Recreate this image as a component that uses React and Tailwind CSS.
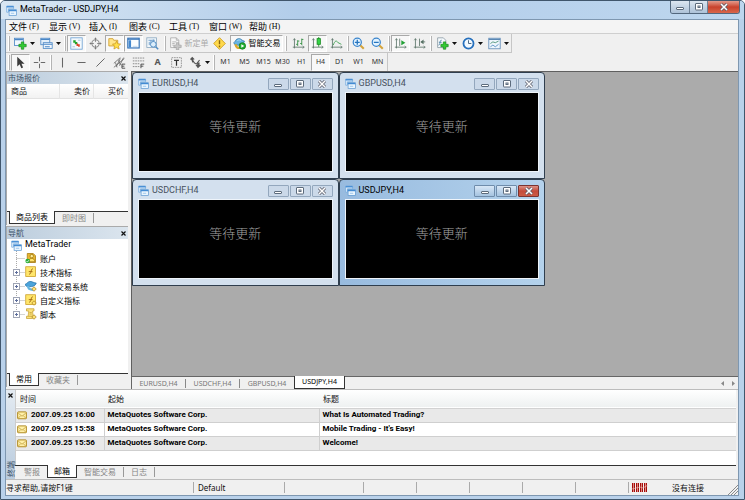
import React from "react";

const DOC = "#4a86c5";

function Svg({ children, className = "size-[13px]" }) {
  return (
    <svg viewBox="0 0 16 16" fill="none" className={`${className} shrink-0`} aria-hidden="true">
      {children}
    </svg>
  );
}

const Logo = ({ className = "size-[11px]" }) => (
  <Svg className={className}>
    <path d="M1 1.500h10v4H3.500v5H1z" fill="#eaf4fd" stroke="#69a5dc" />
    <path d="M1 2.500h10" stroke="#4b90d5" strokeWidth="2" />
    <rect x="4.500" y="7" width="10.500" height="8" fill="#eff8ff" stroke="#5794cf" />
    <path d="M4 8h11" stroke="#438bd3" strokeWidth="2" />
    <path d="M7 12h5" stroke="#75aee0" />
  </Svg>
);

const Plus = () => (
  <path d="M9 6h3v3h3v3h-3v3H9v-3H6V9h3z" fill="#32cb32" stroke="#118519" strokeWidth=".8" />
);

const NewChart = () => (
  <Svg>
    <rect x=".5" y="1.500" width="11" height="9" fill="#f1f8fe" stroke={DOC} />
    <path d="M1 3h10" stroke={DOC} strokeWidth="2" />
    <Plus />
  </Svg>
);
const Profiles = () => (
  <Svg>
    <rect x="1" y="1.500" width="11" height="8" fill="#e3effa" stroke={DOC} />
    <path d="M1 3h11" stroke={DOC} strokeWidth="1.500" />
    <rect x="4" y="7" width="11" height="7" fill="#f1f7fd" stroke={DOC} />
    <path d="M4 9h11M6 12h6" stroke={DOC} strokeWidth="1.300" />
  </Svg>
);
const MarketIcon = () => (
  <Svg>
    <rect x="1" y="1" width="14" height="14" fill="#f4f9fd" stroke="#6aa0d2" />
    <path d="M4 4h3v2h2v3H6V7H4z" fill="#20a52b" />
    <path d="M8 8h2v1h2v3h-2v-1H8z" fill="#e04027" />
    <path d="M10 4h3M3 12h3" stroke="#9dbbd4" />
  </Svg>
);
const Target = () => (
  <Svg>
    <circle cx="8" cy="8" r="4.500" stroke="#8b8b8b" strokeWidth="1.300" />
    <path d="M8 1v5M8 10v5M1 8h5M10 8h5" stroke="#777" />
    <path d="m6.500 2.500 1.500-2 1.500 2zM6.500 13.500l1.500 2 1.500-2zM2.500 6.500.5 8l2 1.500zM13.500 6.500l2 1.500-2 1.500z" fill="#777" />
  </Svg>
);
const StarFolder = () => (
  <Svg>
    <path d="M1 2h5l1 2h5v7H1z" fill="#ffe58a" stroke="#cf9b22" />
    <path d="m10.500 5 1.500 3.300 3.500.4-2.600 2.500.7 3.600-3.100-1.800-3.200 1.800.7-3.600-2.500-2.500 3.500-.4z" fill="#ffdf48" stroke="#c69115" strokeWidth=".8" />
  </Svg>
);
const TerminalIcon = () => (
  <Svg>
    <rect x="1" y="1.500" width="14" height="12" fill="#fafdff" stroke="#2f6fb6" strokeWidth="1.400" />
    <path d="M1 3h14" stroke="#2f6fb6" />
    <rect x="2" y="4" width="3" height="9" fill="#4388cf" />
    <path d="M7 11.500h6" stroke="#b7d3eb" />
  </Svg>
);
const Tester = () => (
  <Svg>
    <rect x="1" y="1" width="12" height="12" fill="#f3f8fb" stroke="#8aa7bf" />
    <path d="M3 4h8M4 10V6M6 8V4M9 7V3" stroke="#5d93c5" />
    <circle cx="9" cy="9" r="3.500" fill="#dceefb" stroke="#4f8cc3" strokeWidth="1.200" />
    <path d="m12 12 3 3" stroke="#4f8cc3" strokeWidth="1.800" />
  </Svg>
);
const NewOrder = () => (
  <Svg>
    <path d="M2 1h7l3 3v9H2z" fill="#f8f8f8" stroke="#aaa" />
    <path d="M9 1v3h3M4 6h5M4 8h3M4 10h2" stroke="#aaa" />
    <path d="M9 7h3v3h3v3h-3v3H9v-3H6v-3h3z" fill="#c6c6c6" stroke="#999" strokeWidth=".7" />
  </Svg>
);
const Warning = () => (
  <Svg>
    <path d="m8 .8 7.200 7.200L8 15.200.8 8z" fill="#ffd94b" stroke="#c79817" />
    <path d="M8 4v5M8 10.500v2" stroke="#8a6610" strokeWidth="1.700" />
  </Svg>
);
const Expert = () => (
  <Svg>
    <path d="M1 7c2-1 2-5 6-5s4 3 7 3c0 3-5 5-8 5S1 9 1 7z" fill="#67b4e2" stroke="#347aaf" />
    <path d="M5 5c1-2 4-2 5 0" stroke="#b8e4f7" />
    <path d="M3 9c1 4 3 5 6 4" stroke="#dba82d" strokeWidth="3" />
    <circle cx="11.500" cy="11" r="4" fill="#20ad32" stroke="#11811d" />
    <path d="m10.200 8.800 3.600 2.200-3.600 2.200z" fill="#fff" />
  </Svg>
);

const Axes = ({ children }) => (
  <Svg>
    <path d="M3 2v12M1 12.500h14" stroke="#567064" />
    <path d="m1.500 4 1.500-2 1.500 2M13 11l2 1.500-2 1.500" stroke="#567064" strokeWidth=".8" />
    {children}
  </Svg>
);
const Bars = () => (
  <Axes><path d="M7 4v7M5 9h2M7 5h2M12 2v8M10 8h2M12 3h2" stroke="#258734" /></Axes>
);
const Candles = () => (
  <Axes>
    <path d="M9.500 0v12" stroke="#15891e" />
    <rect x="7.500" y="2" width="4" height="7" fill="#35d647" stroke="#15891e" />
  </Axes>
);
const LineIcon = () => (
  <Axes><path d="M4 10c2-6 4-6 6-3l4 2" stroke="#2f9a42" /></Axes>
);
const Scroll = () => (
  <Axes><path d="M7 2v9" stroke="#567064" /><path d="m9 4 5 3-5 3z" fill="#23a137" /></Axes>
);
const Shift = () => (
  <Axes><path d="M8 2v9M10 6h5" stroke="#567064" /><path d="m13 3-4 3 4 3z" fill="#567064" /></Axes>
);
const Zoom = ({ plus }) => (
  <Svg>
    <path d="m10 10 4.500 4.500" stroke="#d4a33a" strokeWidth="2.600" />
    <circle cx="6.500" cy="6.500" r="5" fill="#e3f3ff" stroke="#3984cc" strokeWidth="1.500" />
    <path d={plus ? "M3.500 6.500h6M6.500 3.500v6" : "M3.500 6.500h6"} stroke="#2675bf" strokeWidth="1.600" />
  </Svg>
);
const Indicators = () => (
  <Svg>
    <path d="M2 1h7l3 3v9H2z" fill="#f6fafc" stroke="#8b9aa4" />
    <path d="M7 4C4 3 6 10 3 10M3.500 6.500H7" stroke="#41799f" />
    <Plus />
  </Svg>
);
const Clock = () => (
  <Svg>
    <circle cx="8" cy="8" r="6.200" fill="#f2f9ff" stroke="#2670bd" strokeWidth="2.200" />
    <path d="M8 4v4h3.500" stroke="#4a6884" strokeWidth="1.200" />
  </Svg>
);
const Template = () => (
  <Svg>
    <rect x="1" y="1.500" width="14" height="13" fill="#edf5fc" stroke="#5a87b4" />
    <path d="M1 3h14" stroke="#5a87b4" strokeWidth="1.600" />
    <path d="m3 8 3-2 3 1 4-2" stroke="#3d8a6d" />
    <path d="m3 12 3-2 3 2 4-3" stroke="#4b87bd" />
  </Svg>
);

const Cursor = () => (
  <Svg><path d="M4 1v12l3-3 2 5 2.200-1-2-4.500H13z" fill="#3d3d3d" /></Svg>
);
const Cross = () => (
  <Svg><path d="M8 1v5.500M8 9.500V15M1 8h5.500M9.500 8H15" stroke="#666" strokeWidth="1.200" /></Svg>
);
const VLine = () => <Svg><path d="M8 2v12" stroke="#666" strokeWidth="1.300" /></Svg>;
const HLine = () => <Svg><path d="M3 8h10" stroke="#666" strokeWidth="1.300" /></Svg>;
const Diagonal = () => <Svg><path d="M3 13 13 3" stroke="#666" strokeWidth="1.200" /></Svg>;
const Channel = () => (
  <Svg>
    <path d="m1 9 8-7M1 14 14 3M4 13l5-10M8 12l5-10M3 8l2 6M7 5l2 6" stroke="#666" />
    <path d="M15 10h-4v5h4M11 12.500h3" stroke="#333" />
  </Svg>
);
const Fibo = () => (
  <Svg>
    <path d="M1 2.500h14M1 6h14M1 9.500h8M1 13h8" stroke="#777" strokeDasharray="2 1" />
    <path d="M15 10h-4v5M11 12.500h3" stroke="#333" />
  </Svg>
);
const LabelIcon = () => (
  <Svg>
    <rect x="2" y="2" width="12" height="12" stroke="#888" strokeDasharray="2 1" />
    <path d="M5 5.500h6M8 5.500V12" stroke="#333" strokeWidth="1.500" />
  </Svg>
);
const Arrows = () => (
  <Svg>
    <path d="m1 4 3-3 3 3-2 .5L7 8H4L3 5zM11 15l-3-4h2V8h3v3h2z" fill="#555" />
    <path d="m6 8 3 2 4-5" stroke="#555" strokeWidth="1.300" />
  </Svg>
);

const Caret = () => (
  <svg viewBox="0 0 5 3" className="h-[3px] w-[5px] shrink-0" aria-hidden="true">
    <path d="M0 0h5L2.500 3z" fill="#111" />
  </svg>
);

const Grip = ({ w = "w-[6px]" }) => (
  <span className={`flex h-[15px] shrink-0 justify-center ${w}`}>
    <span className="w-[2px] border-x border-l-white border-r-[#b4b4b4]" />
  </span>
);

function Tool({ label, children, on, menu, w = "w-[19px]" }) {
  return (
    <button type="button" aria-label={label} aria-pressed={on} className={`flex h-[18px] shrink-0 items-center justify-center ${w}`}>
      <span
        className={`flex h-[17px] items-center justify-center gap-[3px] border ${
          on ? "w-full border-[#a9a9a9] border-r-white border-b-white bg-[#f8f8f8]" : "border-transparent"
        }`}
      >
        {children}
        {menu && <Caret />}
      </span>
    </button>
  );
}

const MENUS = [["文件", "F"], ["显示", "V"], ["插入", "I"], ["图表", "C"], ["工具", "T"], ["窗口", "W"], ["帮助", "H"]];

function CaptionButtons({ active }) {
  const base = "flex h-[12px] w-[21px] items-center justify-center rounded-[1px] border";
  const plain = active ? "border-[#6f8cab] bg-linear-to-b from-[#d8e7f6] to-[#a5c3e0]" : "border-[#93a7bd] bg-[#cbd9e9]";
  return (
    <div className="flex gap-px">
      <button type="button" aria-label="最小化" className={`${base} ${plain}`}>
        <Glyph kind="min" />
      </button>
      <button type="button" aria-label="最大化" className={`${base} ${plain}`}>
        <Glyph kind="max" />
      </button>
      <button
        type="button"
        aria-label="关闭"
        className={`${base} ${active ? "border-[#7c3430] bg-linear-to-b from-[#dc9186] via-[#c44a3a] to-[#cc5b45]" : plain}`}
      >
        <Glyph kind="close" />
      </button>
    </div>
  );
}

function Glyph({ kind }) {
  return (
    <svg viewBox="0 0 10 8" className="h-[8px] w-[10px]" fill="none" aria-hidden="true">
      {kind === "min" && <rect x="1.500" y="4.500" width="7" height="2" rx=".5" fill="#fff" stroke="#5c6b7c" />}
      {kind === "max" && (
        <>
          <rect x="1.500" y=".5" width="7" height="6.500" rx=".5" fill="#fff" stroke="#5c6b7c" />
          <rect x="4" y="3" width="2" height="1.500" fill="#fff" stroke="#5c6b7c" />
        </>
      )}
      {kind === "close" && (
        <>
          <path d="m2 1 6 6M8 1 2 7" stroke="#5c5f6c" strokeWidth="3" />
          <path d="m2 1 6 6M8 1 2 7" stroke="#fff" strokeWidth="1.500" />
        </>
      )}
    </svg>
  );
}

function ChartWindow({ name, active }) {
  return (
    <section
      className={`flex h-[107px] flex-col rounded-t-[4px] border border-[#2f3e4e] px-[5px] pb-[6px] ${
        active ? "bg-linear-to-r from-[#98bbdf] to-[#b4d2ec]" : "bg-[#d3e0ee]"
      }`}
    >
      <header className="flex h-[19px] shrink-0 items-center justify-between pt-[2px]">
        <div className="flex items-center gap-[3px]">
          <Logo />
          <h2 className={`font-[Roboto,sans-serif] text-[9px] ${active ? "text-black" : "text-[#48525e]"}`}>{name}</h2>
        </div>
        <CaptionButtons active={active} />
      </header>
      <div className="flex flex-1 items-center justify-center border border-[#eef4fa] bg-black pb-[12px]">
        <span className="font-['Noto_Sans_CJK_SC',sans-serif] text-[13px] leading-[16px] font-light text-[#a3a3a3]">等待更新</span>
      </div>
    </section>
  );
}

function PanelTitle({ children }) {
  return (
    <header className="flex h-[12px] shrink-0 items-center justify-between bg-linear-to-r from-[#bccddd] to-[#dbe5ee] pr-[2px] pl-px">
      <h2 className="text-[8px] leading-[12px] text-[#3c5268]">{children}</h2>
      <button type="button" aria-label="关闭" className="flex"><CloseX /></button>
    </header>
  );
}

const CloseX = () => (
  <svg viewBox="0 0 5 5" className="size-[5px]" aria-hidden="true">
    <path d="m.5.5 4 4M4.500.5l-4 4" stroke="#111" strokeWidth="1.200" />
  </svg>
);

function Tabs({ items, active }) {
  return (
    <div role="tablist" className="flex h-[14px] shrink-0 items-start bg-[#f0f0f0]">
      {items.map((t, i) => (
        <React.Fragment key={t}>
          {i === 0 && <span className="w-[2px] self-start border-t border-[#333]" />}
          <button
            type="button"
            role="tab"
            aria-selected={i === active}
            className={
              i === active
                ? "h-[13px] border-x border-b border-[#333] bg-white px-[6px] leading-[12px] text-black"
                : "flex h-[13px] items-center border-t border-[#333] text-[#858585]"
            }
          >
            {i === active ? t : (
              <span className={`px-[7px] leading-[10px] ${i + 1 === active ? "" : "border-r border-[#999]"}`}>{t}</span>
            )}
          </button>
        </React.Fragment>
      ))}
      <span className="flex-1 border-t border-[#333]" />
    </div>
  );
}

const Account = () => (
  <Svg className="size-[12px]">
    <path d="M3 2h8l3 3v9H3z" fill="#e8b72e" stroke="#a5780f" />
    <circle cx="9" cy="5.500" r="2.300" fill="#fff09b" stroke="#9c7414" />
    <path d="M5 13c0-6 8-6 8 0z" fill="#ffe36c" stroke="#9c7414" />
    <circle cx="3.500" cy="12" r="3" fill="#26ae36" />
    <path d="m2 12 1.200 1.500L5 11" stroke="#fff" />
  </Svg>
);
const Indicator = ({ gear }) => (
  <Svg className="size-[12px]">
    <rect x="1" y="1" width="13" height="13" fill="#ffe66b" stroke="#c99a1e" />
    <path d="M10.500 4c-3-1.500-1.500 7-5 7M5 7.500h5" stroke="#a56b14" strokeWidth="1.300" />
    {gear && <path d="m12 9 3 3-3 3-3-3z" fill="#ffe272" stroke="#a98220" />}
  </Svg>
);
const Robot = () => (
  <Svg className="size-[12px]">
    <path d="M0 6c3-1 4-5 8-4s4 2 7 2c-1 4-5 5-9 5S1 8 0 6z" fill="#4ba3da" stroke="#2671a8" />
    <path d="M4 8c0 5 4 5 7 5" stroke="#65b4df" strokeWidth="3" />
    <path d="m12 9 3 3-3 3-3-3z" fill="#ffe272" stroke="#a98220" />
  </Svg>
);
const Script = () => (
  <Svg className="size-[12px]">
    <path d="M2 1h10v3h-2l1 8H4L5 4H2z" fill="#fbe27c" stroke="#c7a137" />
    <path d="M2 11h8v3H2zM6 6h3M6 8h3" fill="#fbe27c" stroke="#c7a137" />
    <path d="m12 9 3 3-3 3-3-3z" fill="#ffe272" stroke="#a98220" />
  </Svg>
);

const TREE = [
  ["账户", <Account />, false],
  ["技术指标", <Indicator />, true],
  ["智能交易系统", <Robot />, true],
  ["自定义指标", <Indicator gear />, true],
  ["脚本", <Script />, true],
];

const Node = ({ box, last }) => (
  <svg viewBox="0 0 14 14" className="h-[14px] w-[14px] shrink-0" fill="none" aria-hidden="true">
    <path d={last ? "M5.500 0v7M5.500 7.500H14" : "M5.500 0v14M5.500 7.500H14"} stroke="#a8a8a8" strokeDasharray="1 1" />
    {box && (
      <>
        <rect x="2.500" y="4.500" width="6" height="6" fill="#fff" stroke="#9fa5b5" />
        <path d="M4 7.500h3M5.500 6v3" stroke="#5f6f9c" />
      </>
    )}
  </svg>
);

const Mail = () => (
  <Svg className="size-[10px]">
    <rect x="1" y="3" width="14" height="11" rx="1" fill="#fff0a8" stroke="#ad8519" strokeWidth="1.500" />
    <path d="m2 5 6 5 6-5M2 13l4-4M14 13l-4-4" stroke="#b18a24" />
  </Svg>
);

const MAILS = [
  ["2007.09.25 16:00", "What Is Automated Trading?"],
  ["2007.09.25 15:58", "Mobile Trading - It's Easy!"],
  ["2007.09.25 15:56", "Welcome!"],
];

const FRAMES = ["M1", "M5", "M15", "M30", "H1", "H4", "D1", "W1", "MN"];
const CHARTS = ["EURUSD,H4", "USDCHF,H4", "GBPUSD,H4", "USDJPY,H4"];

export default function App() {
  return (
    <div className="flex h-screen min-h-[500px] flex-col overflow-hidden rounded-t-[5px] border border-[#40566c] bg-[#b9d1ea] pr-[5px] pb-[3px] pl-[4px] font-['Noto_Sans','Noto_Sans_CJK_SC',sans-serif] text-[8px] text-[#111]">
      <header className="-mr-[5px] -ml-[4px] flex h-[18px] shrink-0 items-start justify-between bg-linear-to-r from-[#d9e7f3] via-[#b2cdea] via-40% to-[#bdd6ee] pr-[4px] pl-[5px]">
        <div className="flex h-[18px] items-center gap-[3px]">
          <Logo />
          <h1 className="font-[Roboto,sans-serif] text-[9px] text-black">MetaTrader - USDJPY,H4</h1>
        </div>
        <div className="flex h-[13px] overflow-hidden rounded-b-[3px] border border-t-0 border-[#52677d]">
          <button type="button" aria-label="最小化" className="flex w-[19px] items-center justify-center border-r border-[#6f8398] bg-linear-to-b from-[#dce6f0] to-[#adc2d8]"><Glyph kind="min" /></button>
          <button type="button" aria-label="最大化" className="flex w-[18px] items-center justify-center border-r border-[#6f8398] bg-linear-to-b from-[#dce6f0] to-[#adc2d8]"><Glyph kind="max" /></button>
          <button type="button" aria-label="关闭" className="flex w-[31px] items-center justify-center bg-linear-to-b from-[#e39a8c] via-[#c9412c] to-[#d9664a]"><Glyph kind="close" /></button>
        </div>
      </header>

      <div className="flex min-h-0 flex-1 flex-col border border-[#7e97b0] bg-[#f0f0f0]">
        <nav className="flex h-[14px] shrink-0 items-center border-b border-[#cfcfcf] bg-[#f4f4f4] pl-[3px]">
          {MENUS.map(([name, key]) => (
            <button type="button" key={key} className="flex w-[40px] shrink-0 items-center text-[9px] leading-[12px] whitespace-nowrap text-black">
              {name}
              <span className="pl-[2px] font-['Liberation_Serif',serif] text-[8px]">({key})</span>
            </button>
          ))}
        </nav>

        <div className="flex h-[19px] shrink-0 items-center">
          <div className="flex h-full items-center border-r border-b border-[#c6c6c6]">
            <Grip w="w-[5px]" />
            <Tool label="新图表" menu w="w-[26px]"><NewChart /></Tool>
            <Tool label="配置文件" menu w="w-[26px]"><Profiles /></Tool>
            <Grip w="w-[4px]" />
            <Tool label="市场报价" on><MarketIcon /></Tool>
            <Tool label="数据窗口"><Target /></Tool>
            <Tool label="导航" on><StarFolder /></Tool>
            <Tool label="终端" on><TerminalIcon /></Tool>
            <Tool label="策略测试"><Tester /></Tool>
            <Grip />
            <Tool label="新定单" w="w-[41px]">
              <NewOrder />
              <span className="whitespace-nowrap text-[#a8a8a8]">新定单</span>
            </Tool>
            <Tool label="警告" w="w-[21px]"><Warning /></Tool>
            <Tool label="智能交易" on w="w-[53px]">
              <Expert />
              <span className="whitespace-nowrap text-black">智能交易</span>
            </Tool>
            <Grip />
            <Tool label="柱状图"><Bars /></Tool>
            <Tool label="蜡烛图" on><Candles /></Tool>
            <Tool label="折线图"><LineIcon /></Tool>
            <Grip w="w-[3px]" />
            <Tool label="放大"><Zoom plus /></Tool>
            <Tool label="缩小"><Zoom /></Tool>
            <Grip w="w-[4px]" />
            <Tool label="自动滚动" on><Scroll /></Tool>
            <Tool label="图表平移"><Shift /></Tool>
            <Grip w="w-[4px]" />
            <Tool label="技术指标" menu w="w-[26px]"><Indicators /></Tool>
            <Tool label="周期" menu w="w-[26px]"><Clock /></Tool>
            <Tool label="模板" menu w="w-[26px]"><Template /></Tool>
          </div>
        </div>

        <div className="flex h-[18px] shrink-0 items-center">
          <div className="flex h-full items-center border-r border-[#c6c6c6]">
            <Grip w="w-[5px]" />
            <Tool label="光标" on><Cursor /></Tool>
            <Tool label="十字线"><Cross /></Tool>
            <Grip w="w-[4px]" />
            <Tool label="垂直线"><VLine /></Tool>
            <Tool label="水平线"><HLine /></Tool>
            <Tool label="趋势线"><Diagonal /></Tool>
            <Tool label="等距通道"><Channel /></Tool>
            <Tool label="斐波纳契"><Fibo /></Tool>
            <Tool label="文字"><span className="text-[9px] font-bold text-[#555]">A</span></Tool>
            <Tool label="文字标签"><LabelIcon /></Tool>
            <Tool label="箭头" menu w="w-[26px]"><Arrows /></Tool>
            <Grip w="w-[4px]" />
            {FRAMES.map((f) => (
              <Tool key={f} label={f} on={f === "H4"}>
                <span className="text-[7px] text-[#333]">{f}</span>
              </Tool>
            ))}
          </div>
        </div>

        <div className="flex min-h-0 flex-1">
          <aside className="flex w-[125px] shrink-0 flex-col gap-px pr-[3px] pb-[2px]">
            <section className="flex h-[154px] shrink-0 flex-col border-t border-l border-[#aaa]">
              <PanelTitle>市场报价</PanelTitle>
              <div className="min-h-0 flex-1 bg-white">
                <table className="w-full table-fixed bg-linear-to-b from-white to-[#f2f2f2]">
                  <thead>
                    <tr className="h-[14px] border-b border-[#e2e2e2] leading-[12px]">
                      <th className="w-[52px] pl-[4px] text-left font-normal">商品</th>
                      <th className="border-l border-[#e5e5e5] pr-[3px] text-right font-normal">卖价</th>
                      <th className="border-l border-[#e5e5e5] pr-[4px] text-right font-normal">买价</th>
                    </tr>
                  </thead>
                </table>
              </div>
              <Tabs items={["商品列表", "即时图"]} active={0} />
            </section>
            <section className="flex min-h-0 flex-1 flex-col border-t border-l border-[#aaa]">
              <PanelTitle>导航</PanelTitle>
              <div className="min-h-0 flex-1 bg-white pl-[4px]">
                <div className="flex h-[12px] items-center gap-[3px]">
                  <Logo />
                  <span className="font-[Roboto,sans-serif] text-[9px] text-black">MetaTrader</span>
                </div>
                <ul>
                  {TREE.map(([name, icon, box], i) => (
                    <li key={name} className="flex h-[14px] items-center">
                      <Node box={box} last={i === TREE.length - 1} />
                      {icon}
                      <span className="pl-[3px] leading-[13px] text-black">{name}</span>
                    </li>
                  ))}
                </ul>
              </div>
              <Tabs items={["常用", "收藏夹"]} active={0} />
            </section>
          </aside>

          <main className="flex min-w-0 flex-1 flex-col">
            <div className="min-h-0 flex-1 border-t border-l border-[#5f5f5f] bg-[#ababab]">
              <div className="grid w-[413px] grid-cols-2">
                <ChartWindow name="EURUSD,H4" />
                <ChartWindow name="GBPUSD,H4" />
                <ChartWindow name="USDCHF,H4" />
                <ChartWindow name="USDJPY,H4" active />
              </div>
            </div>
            <div className="flex h-[13px] shrink-0 items-start border-l border-[#666] text-[7px]">
              <div role="tablist" className="flex">
                {CHARTS.map((c, i) => (
                  <button
                    type="button"
                    role="tab"
                    key={c}
                    aria-selected={i === 3}
                    className={
                      i === 3
                        ? "h-[13px] w-[51px] border-x border-b border-[#333] bg-white leading-[12px] text-black"
                        : "flex h-[13px] w-[54px] items-center border-t border-[#666] text-[#777]"
                    }
                  >
                    {i === 3 ? c : (
                      <span className={`flex-1 leading-[9px] ${i < 2 ? "border-r border-[#888]" : ""}`}>{c}</span>
                    )}
                  </button>
                ))}
              </div>
              <div className="flex h-[13px] flex-1 items-center justify-end gap-[8px] border-t border-[#666] pr-[3px]">
                <button type="button" aria-label="向左" className="flex"><svg viewBox="0 0 3 5" className="h-[5px] w-[3px]"><path d="M3 0v5L0 2.500z" fill="#888" /></svg></button>
                <button type="button" aria-label="向右" className="flex"><svg viewBox="0 0 3 5" className="h-[5px] w-[3px]"><path d="M0 0v5l3-2.500z" fill="#888" /></svg></button>
              </div>
            </div>
          </main>
        </div>

        <section className="flex h-[90px] shrink-0 border-t border-[#bcbcbc] pr-[2px]">
          <div className="flex w-[9px] shrink-0 flex-col items-center justify-between bg-linear-to-b from-[#e4ebf2] to-[#b9cbdd] pt-[3px] pb-[2px]">
            <button type="button" aria-label="关闭" className="flex"><CloseX /></button>
            <span className="rotate-180 leading-[9px] text-[#3c5268] [text-orientation:sideways] [writing-mode:vertical-rl]">终端</span>
          </div>
          <div className="flex min-w-0 flex-1 flex-col">
            <div className="min-h-0 flex-1 border-l border-[#ccc] bg-white">
              <table className="w-full table-fixed">
                <thead>
                  <tr className="h-[18px] border-b border-[#d2d2d2] bg-linear-to-b from-white to-[#eef1f1] text-left leading-[12px]">
                    <th className="w-[88px] pl-[4px] font-normal">时间</th>
                    <th className="w-[215px] pl-[4px] font-normal">起始</th>
                    <th className="pl-[4px] font-normal">标题</th>
                  </tr>
                </thead>
                <tbody>
                  {MAILS.map(([time, title]) => (
                    <tr key={time} className="h-[14px] border-b border-[#cfcfcf] font-[Roboto,sans-serif] leading-[12px] font-bold text-black odd:bg-[#e9e9e9]">
                      <td>
                        <div className="flex items-center gap-[4px] pl-px"><Mail />{time}</div>
                      </td>
                      <td className="border-l border-[#cfcfcf] pl-[3px]">MetaQuotes Software Corp.</td>
                      <td className="border-l border-[#cfcfcf] pl-[3px]">{title}</td>
                    </tr>
                  ))}
                </tbody>
              </table>
            </div>
            <Tabs items={["警报", "邮箱", "智能交易", "日志"]} active={1} />
          </div>
        </section>

        <footer className="flex h-[16px] shrink-0 items-center border-t border-[#bdbdbd] leading-[11px]">
          <span className="min-w-0 flex-1">寻求帮助,请按F1键</span>
          <span className="w-[91px] border-l border-[#aaa] pl-[4px]">Default</span>
          <span className="h-[11px] w-[79px] border-l border-[#aaa]" />
          <span className="h-[11px] w-[53px] border-l border-[#aaa]" />
          <span className="h-[11px] w-[53px] border-l border-[#aaa]" />
          <span className="h-[11px] w-[53px] border-l border-[#aaa]" />
          <span className="h-[11px] w-[53px] border-l border-[#aaa]" />
          <span className="h-[11px] w-[53px] border-l border-[#aaa]" />
          <span className="flex w-[100px] items-center gap-[24px] border-l border-[#aaa] pl-[3px]">
            <svg viewBox="0 0 16 9" className="h-[9px] w-[16px] shrink-0" fill="none" aria-hidden="true">
              <path d="M.5 0v9M2.500 0v9M4.500 0v9M6.500 0v9M8.500 0v9M10.500 0v9M12.500 0v9M14.500 0v9" stroke="#a30c0c" />
              <path d="M1.500 0v9M5.500 0v9M9.500 0v9M13.500 0v9" stroke="#e08a80" />
              <path d="m0 6 8-2 3 1 5-3" stroke="#f4c8c0" strokeWidth=".6" />
            </svg>
            没有连接
          </span>
          <svg viewBox="0 0 10 10" className="size-[10px] shrink-0 self-end" aria-hidden="true">
            <path d="m0 10L10 0M3 10l7-7M6 10l4-4" stroke="#8a8a8a" />
          </svg>
        </footer>
      </div>
    </div>
  );
}
